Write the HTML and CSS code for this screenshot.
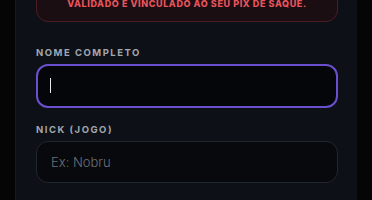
FILE: index.html
```html
<!DOCTYPE html>
<html lang="pt-BR">
<head>
  <meta charset="UTF-8">
  <title>Cadastro</title>
  <link rel="stylesheet" href="styles.css">
</head>
<body>
  <div class="card">
    <div class="alert">Validado e vinculado ao seu PIX de saque.</div>

    <label class="label" for="nome">Nome completo</label>
    <div class="field focused">
      <input class="input" id="nome" type="text">
      <span class="caret"></span>
    </div>

    <label class="label" for="nick">Nick (jogo)</label>
    <div class="field">
      <input class="input" id="nick" type="text" placeholder="Ex: Nobru">
    </div>
  </div>
</body>
</html>
```

FILE: styles.css
```css
html, body {
  margin: 0;
  padding: 0;
  height: 200px;
  background-color: #050506;
  overflow: hidden;
  font-family: Inter, "Open Sans", sans-serif;
}
.card {
  margin: -16px 15px 0 15px;
  padding: 0 19px 0 20px;
  height: 240px;
  background-color: #0d1016;
  border-left: 1px solid #151921;
}
.alert {
  padding: 12px 16px 11px;
  line-height: 13px;
  font-size: 9px;
  font-weight: 800;
  letter-spacing: 0.6px;
  text-transform: uppercase;
  text-align: center;
  color: #e8545c;
  background-color: #1b0e13;
  border: 1px solid #4a1d25;
  border-radius: 12px;
  margin-bottom: 25px;
}
.label {
  display: block;
  font-size: 9.5px;
  line-height: 12px;
  font-weight: 700;
  letter-spacing: 1.5px;
  text-transform: uppercase;
  color: #a2a6b0;
  margin-bottom: 5px;
}
.field {
  position: relative;
  margin-bottom: 16px;
}
.input {
  display: block;
  box-sizing: border-box;
  width: 100%;
  height: 42px;
  padding: 0 14px;
  font-family: inherit;
  font-size: 13px;
  font-weight: 300;
  color: #e6e8ee;
  background-color: #07090d;
  border: 1px solid #22262e;
  border-radius: 12px;
  outline: none;
  caret-color: transparent;
}
.input::placeholder {
  color: #6c7079;
}
.focused .input {
  height: 44px;
  border: 2px solid #6a50cf;
  background-color: #050609;
}
.caret {
  position: absolute;
  left: 14px;
  top: 14px;
  width: 1px;
  height: 15px;
  background-color: #e8e8ee;
}
```
